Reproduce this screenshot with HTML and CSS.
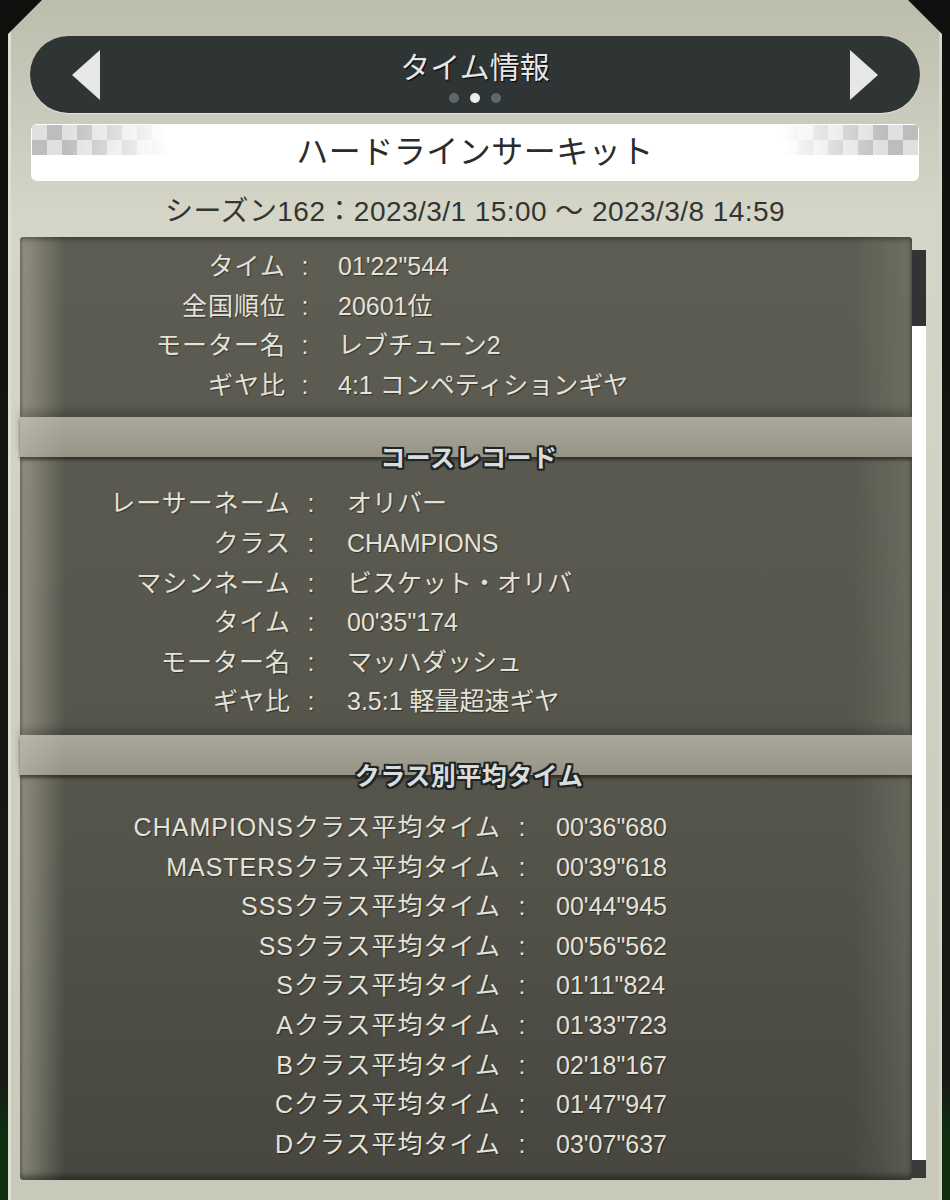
FILE: index.html
```html
<!DOCTYPE html>
<html lang="ja">
<head>
    <meta charset="UTF-8">
    <meta name="viewport" content="width=device-width, initial-scale=1.0">
    <title>タイム情報</title>
    <link rel="stylesheet" href="styles.css">
</head>
<body>
    <div class="frame">
        <div class="header">
            <svg class="arrow" width="28" height="50" viewBox="0 0 28 50"><polygon points="28,0 28,50 0,25"/></svg>
            <div class="header-center">
                <div class="header-title">タイム情報</div>
                <div class="dots">
                    <span class="dot"></span>
                    <span class="dot on"></span>
                    <span class="dot"></span>
                </div>
            </div>
            <svg class="arrow" width="28" height="50" viewBox="0 0 28 50"><polygon points="0,0 0,50 28,25"/></svg>
        </div>

        <div class="banner">ハードラインサーキット</div>
        <div class="season">シーズン162：2023/3/1 15:00 ～ 2023/3/8 14:59</div>

        <div class="panel">
            <div class="panel-body">
                <div class="section s1">
                    <div class="row"><span class="lbl">タイム</span><span class="sep">:</span><span class="val">01'22"544</span></div>
                    <div class="row"><span class="lbl">全国順位</span><span class="sep">:</span><span class="val">20601位</span></div>
                    <div class="row"><span class="lbl">モーター名</span><span class="sep">:</span><span class="val">レブチューン2</span></div>
                    <div class="row"><span class="lbl">ギヤ比</span><span class="sep">:</span><span class="val">4:1 コンペティションギヤ</span></div>
                </div>

                <div class="band"></div>
                <div class="section-title">コースレコード</div>

                <div class="section s2">
                    <div class="row"><span class="lbl">レーサーネーム</span><span class="sep">:</span><span class="val">オリバー</span></div>
                    <div class="row"><span class="lbl">クラス</span><span class="sep">:</span><span class="val">CHAMPIONS</span></div>
                    <div class="row"><span class="lbl">マシンネーム</span><span class="sep">:</span><span class="val">ビスケット・オリバ</span></div>
                    <div class="row"><span class="lbl">タイム</span><span class="sep">:</span><span class="val">00'35"174</span></div>
                    <div class="row"><span class="lbl">モーター名</span><span class="sep">:</span><span class="val">マッハダッシュ</span></div>
                    <div class="row"><span class="lbl">ギヤ比</span><span class="sep">:</span><span class="val">3.5:1 軽量超速ギヤ</span></div>
                </div>

                <div class="band"></div>
                <div class="section-title">クラス別平均タイム</div>

                <div class="section s3">
                    <div class="row"><span class="lbl">CHAMPIONSクラス平均タイム</span><span class="sep">:</span><span class="val">00'36"680</span></div>
                    <div class="row"><span class="lbl">MASTERSクラス平均タイム</span><span class="sep">:</span><span class="val">00'39"618</span></div>
                    <div class="row"><span class="lbl">SSSクラス平均タイム</span><span class="sep">:</span><span class="val">00'44"945</span></div>
                    <div class="row"><span class="lbl">SSクラス平均タイム</span><span class="sep">:</span><span class="val">00'56"562</span></div>
                    <div class="row"><span class="lbl">Sクラス平均タイム</span><span class="sep">:</span><span class="val">01'11"824</span></div>
                    <div class="row"><span class="lbl">Aクラス平均タイム</span><span class="sep">:</span><span class="val">01'33"723</span></div>
                    <div class="row"><span class="lbl">Bクラス平均タイム</span><span class="sep">:</span><span class="val">02'18"167</span></div>
                    <div class="row"><span class="lbl">Cクラス平均タイム</span><span class="sep">:</span><span class="val">01'47"947</span></div>
                    <div class="row"><span class="lbl">Dクラス平均タイム</span><span class="sep">:</span><span class="val">03'07"637</span></div>
                </div>
            </div>
            <div class="scrollbar">
                <div class="thumb"></div>
                <div class="thumb-end"></div>
            </div>
        </div>
    </div>
</body>
</html>
```

FILE: styles.css
```css
* {
    box-sizing: border-box;
}
body {
    margin: 0;
    background: linear-gradient(#0f0f0d 0, #1a1a15 1080px, #0f2f10 1130px, #0f2f10 100%);
    font-family: "Liberation Sans", "Noto Sans CJK JP", sans-serif;
}
.frame {
    margin: 0 8px;
    height: 1200px;
    padding: 36px 9px 0;
    border-left: 3px solid #dedfd2;
    border-right: 3px solid #d4d5c8;
    background: linear-gradient(#bcbdad 0, #c9cabb 110px, #d5d6c7 220px, #c8c9b9 1200px);
    clip-path: polygon(0 34px, 34px 0, calc(100% - 34px) 0, 100% 34px, 100% 100%, 0 100%);
    display: flex;
    flex-direction: column;
}

/* header bar */
.header {
    margin: 0 10px;
    height: 77px;
    flex-shrink: 0;
    background: #2f3535;
    border-radius: 39px;
    padding: 0 42px;
    display: flex;
    justify-content: space-between;
    box-shadow: 0 1px 0 rgba(255, 255, 255, 0.45);
}
.arrow {
    align-self: center;
    fill: #e6e7e6;
}
.header-center {
    display: flex;
    flex-direction: column;
    align-items: center;
    padding-top: 14px;
}
.header-title {
    font-size: 30px;
    line-height: 36px;
    color: #e6e6e6;
    text-shadow: 1px 1px 1px #000;
}
.dots {
    display: flex;
    gap: 11px;
    margin-top: 7px;
}
.dot {
    width: 10px;
    height: 10px;
    border-radius: 50%;
    background: #5f6868;
}
.dot.on {
    background: #ededed;
}

/* course banner */
.banner {
    position: relative;
    margin: 11px 11px 0;
    height: 57px;
    flex-shrink: 0;
    background: #fff;
    border-radius: 6px;
    font-size: 32px;
    line-height: 57px;
    letter-spacing: 0.5px;
    text-align: center;
    color: #2b2b2b;
    overflow: hidden;
}
.banner::before,
.banner::after {
    content: "";
    position: absolute;
    top: 1px;
    width: 136px;
    height: 30px;
    background-image: conic-gradient(#bdbdbd 25%, #e0e0e0 0 50%, #bdbdbd 0 75%, #e0e0e0 0);
    background-size: 30px 30px;
}
.banner::before {
    left: 1px;
    -webkit-mask-image: linear-gradient(to right, #000 25%, transparent);
    mask-image: linear-gradient(to right, #000 25%, transparent);
}
.banner::after {
    right: 1px;
    background-position: right top;
    -webkit-mask-image: linear-gradient(to left, #000 25%, transparent);
    mask-image: linear-gradient(to left, #000 25%, transparent);
}
.season {
    padding-top: 13px;
    margin-bottom: 7px;
    font-size: 28px;
    line-height: 36px;
    letter-spacing: 0.45px;
    text-align: center;
    color: #343434;
    flex-shrink: 0;
}

/* info panel */
.panel {
    margin-right: 4px;
    height: 943px;
    display: flex;
}
.panel-body {
    flex: 1;
    padding-top: 10px;
    border-radius: 3px;
    background:
        linear-gradient(to right, rgba(200, 200, 180, 0.5), rgba(200, 200, 180, 0) 45px, rgba(200, 200, 180, 0) calc(100% - 60px), rgba(200, 200, 180, 0.16)),
        linear-gradient(#5e5d53, #55544b 600px, #47463f);
    box-shadow: inset 0 3px 4px rgba(0, 0, 0, 0.3), inset 0 -5px 5px rgba(0, 0, 0, 0.35);
}
.row {
    display: flex;
    height: 39.6px;
    font-size: 25px;
    line-height: 39.6px;
    color: #e3e3db;
    text-shadow: 1px 1px 1px rgba(0, 0, 0, 0.45);
    white-space: nowrap;
}
.lbl {
    width: var(--lw);
    text-align: right;
    letter-spacing: 1px;
}
.sep {
    width: var(--sw);
    text-align: center;
}
.val {
    padding-left: var(--vp);
}
.s1 {
    --lw: 266px;
    --sw: 38px;
    --vp: 14px;
}
.s2 {
    --lw: 271px;
    --sw: 40px;
    --vp: 16px;
    padding-top: 14px;
}
.s3 {
    --lw: 481px;
    --sw: 42px;
    --vp: 13px;
    padding-top: 20px;
}
.band {
    height: 40px;
    margin-top: 12px;
    background:
        linear-gradient(to right, rgba(210, 210, 195, 0.35), rgba(210, 210, 195, 0) 45px),
        linear-gradient(#aaa89a, #969486);
    box-shadow: 0 -6px 8px rgba(0, 0, 0, 0.2), 0 3px 3px rgba(0, 0, 0, 0.45);
}
.s2 + .band {
    margin-top: 13px;
}
.section-title {
    position: relative;
    margin-top: -11px;
    padding-left: 6px;
    font-size: 25px;
    font-weight: bold;
    line-height: 24px;
    letter-spacing: 0.5px;
    text-align: center;
    color: #d9dddd;
    text-shadow:
        -2px -2px 0 #1f2424, 2px -2px 0 #1f2424, -2px 2px 0 #1f2424, 2px 2px 0 #1f2424,
        0 -2px 0 #1f2424, 0 2px 0 #1f2424, -2px 0 0 #1f2424, 2px 0 0 #1f2424;
}
.scrollbar {
    width: 14px;
    margin: 13px 0 2px;
    background: #fff;
    display: flex;
    flex-direction: column;
    justify-content: space-between;
}
.thumb {
    height: 76px;
    background: #333;
}
.thumb-end {
    height: 18px;
    background: #3a3a3a;
}
```
